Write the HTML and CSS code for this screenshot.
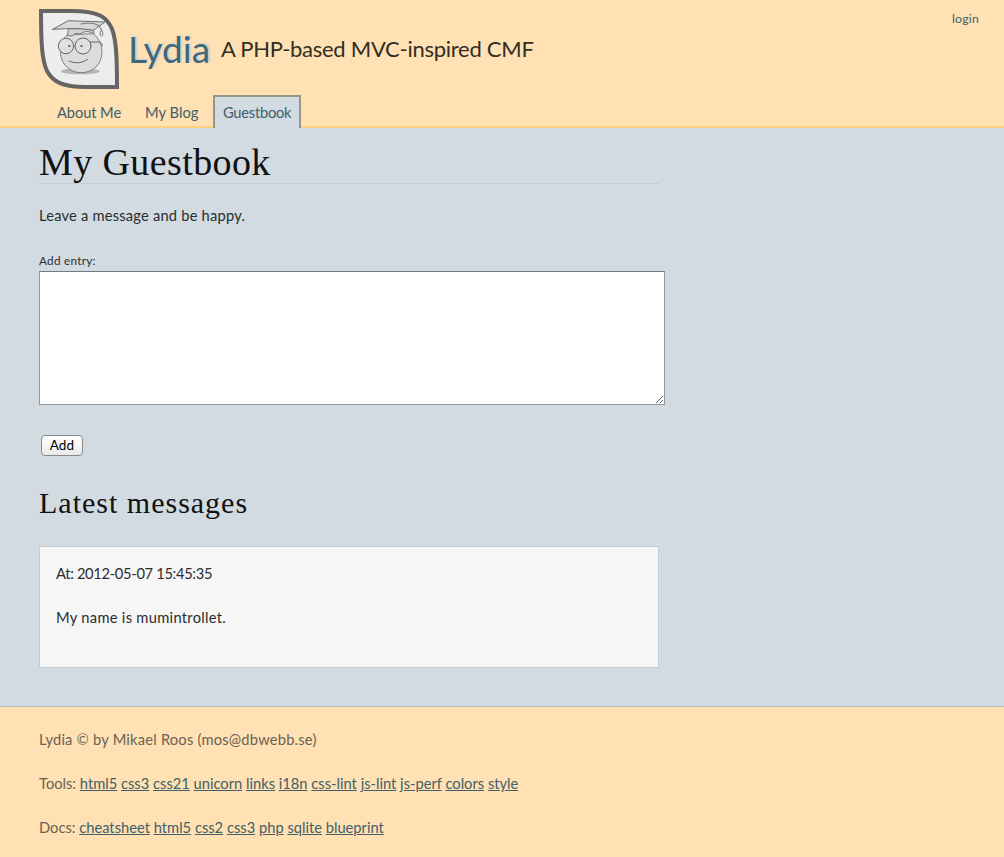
FILE: index.html
```html
<!DOCTYPE html>
<html lang="en">
<head>
<meta charset="utf-8">
<title>My Guestbook</title>
<link rel="stylesheet" href="styles.css">
</head>
<body>
<header class="header">
  <nav class="login"><a href="#">login</a></nav>
  <div class="banner">
    <svg class="logo" viewBox="0 0 80 80" width="80" height="80" fill="none" stroke-linecap="round" stroke-linejoin="round">
      <path d="M2 2H32C60 2 68 8 73 20C77 31 78 45 78 78H46C24 78 14 73 8 62C3 51 2 35 2 2Z" fill="#ededed" stroke="#656564" stroke-width="4" stroke-linejoin="miter"/>
      <ellipse cx="41.3" cy="62.3" rx="19.5" ry="3" fill="#b5b5b5"/>
      <path d="M28.500 26C23 30 21.500 36 21.500 43C21.500 55 31 63.700 42 63.700C54 63.700 63 55 63 43C63 36 60 30 55 25Z" fill="#dcdcdc" stroke="#777" stroke-width=".9"/>
      <path d="M29.500 20L28.300 26.500L33 27Q36 23 41 25Q48 20 55 25L54 20Z" fill="#d3d3d3" stroke="#6c6c6c" stroke-width=".9"/>
      <path d="M13.700 20.300L29.300 11.700L66 13L54.300 21.300Q42 18.500 13.700 20.300Z" fill="#d9d9d9" stroke="#606060" stroke-width=".9"/>
      <path d="M42 15Q52 12.500 60 16.500L62.500 21Q59.500 26 62.500 27Q65.500 26 62.500 21" stroke="#666" stroke-width=".9"/>
      <circle cx="27" cy="37" r="7.700" fill="#e0e0e0" stroke="#666" stroke-width="1"/>
      <circle cx="44" cy="37" r="8" fill="#e0e0e0" stroke="#666" stroke-width="1"/>
      <path d="M51.500 33H61Q63 34 63.300 36.700M30 52Q40 56.500 48.500 50.500" stroke="#666" stroke-width="1"/>
      <circle cx="30.300" cy="37" r="1.100" fill="#555"/><circle cx="42.500" cy="37" r="1.100" fill="#555"/>
    </svg>
    <span class="site-title">Lydia</span>
    <span class="slogan">A PHP-based MVC-inspired CMF</span>
  </div>
  <nav class="navbar">
    <a class="tab about" href="#">About Me</a>
    <a class="tab blog" href="#">My Blog</a>
    <a class="tab selected" href="#">Guestbook</a>
  </nav>
</header>
<main class="main">
  <h1 class="title">My Guestbook</h1>
  <p class="intro">Leave a message and be happy.</p>
  <form>
    <label class="label" for="entry">Add entry:</label>
    <textarea class="entry" id="entry"></textarea>
    <button class="add" type="button">Add</button>
  </form>
  <h2 class="subtitle">Latest messages</h2>
  <article class="message">
    <p class="stamp">At: 2012-05-07 15:45:35</p>
    <p class="text">My name is mumintrollet.</p>
  </article>
</main>
<footer class="footer">
  <p class="copyright">Lydia © by Mikael Roos (mos@dbwebb.se)</p>
  <p class="tools">Tools: <a href="#">html5</a> <a href="#">css3</a> <a href="#">css21</a> <a href="#">unicorn</a> <a href="#">links</a> <a href="#">i18n</a> <a href="#">css-lint</a> <a href="#">js-lint</a> <a href="#">js-perf</a> <a href="#">colors</a> <a href="#">style</a></p>
  <p class="docs">Docs: <a href="#">cheatsheet</a> <a href="#">html5</a> <a href="#">css2</a> <a href="#">css3</a> <a href="#">php</a> <a href="#">sqlite</a> <a href="#">blueprint</a></p>
</footer>
</body>
</html>
```
FILE: styles.css
```css
* { box-sizing: border-box; }
body { margin: 0; background: #d1dbe1; color: #2b2d2e; font: 14.7px/22px Lato, sans-serif; }
p, h1, h2 { margin: 0; }
a { color: #41606a; }
.header { position: relative; height: 128px; background: #ffe1b3; border-bottom: 2px solid #ffd07f; padding: 9px 39px 0; }
.login { position: absolute; top: 8px; right: 25px; font-size: 12.3px; letter-spacing: .2px; }
.login a { text-decoration: none; }
.banner { display: flex; height: 80px; white-space: nowrap; }
.logo { flex: none; }
.site-title { margin-left: 9px; width: 93px; font-size: 37px; line-height: 79px; color: #41677a; text-shadow: 2px -1px 2px #c6d0cc; }
.slogan { font-size: 22px; line-height: 80px; color: #332d24; letter-spacing: -.27px; }
.navbar { display: flex; margin-top: 6px; padding-left: 8px; }
.tab { height: 33px; padding: 4px 8px 0; border: 2px solid transparent; border-bottom: 0; text-decoration: none; white-space: nowrap; }
.about { width: 84px; letter-spacing: -.1px; }
.blog { width: 74px; margin-left: 4px; letter-spacing: .05px; }
.selected { width: 88px; margin-left: 4px; background: #d1dbe1; border-color: #959589; letter-spacing: -.25px; }
.main { height: 578px; padding: 14px 39px 0; }
.title { width: 620px; height: 42px; border-bottom: 1px solid #c2cdd3; font: 38px/41px "Liberation Serif", serif; color: #111; letter-spacing: .4px; }
.intro { margin-top: 20px; letter-spacing: .2px; }
.label { display: block; margin-top: 23px; height: 22px; font-size: 11.7px; letter-spacing: .28px; }
.entry { display: block; width: 626px; height: 134px; margin: 0; border: 1px solid #8f989c; border-top-color: #747b80; background: #fff; resize: both; }
.add { display: block; margin: 30px 0 0 2px; width: 42px; height: 21px; padding: 0; border: 1px solid #888; border-radius: 4px; background: linear-gradient(#fff, #f5f5f5 50%, #e9e9e9); color: #000; font: 13.5px/19px Lato, sans-serif; letter-spacing: .2px; }
.subtitle { margin-top: 30px; height: 34px; font: 30px/34px "Liberation Serif", serif; color: #111; letter-spacing: 1px; }
.message { width: 620px; height: 122px; margin-top: 26px; padding: 15px 16px; border: 1px solid #c4ccd1; background: #f6f6f6; }
.stamp { letter-spacing: -.32px; }
.text { margin-top: 22px; letter-spacing: .29px; }
.footer { height: 151px; border-top: 1px solid #b9bdb9; background: #ffe1b3; padding: 21px 39px 0; color: #6b6254; white-space: nowrap; }
.copyright { letter-spacing: .21px; }
.tools, .docs { margin-top: 22px; }
```
